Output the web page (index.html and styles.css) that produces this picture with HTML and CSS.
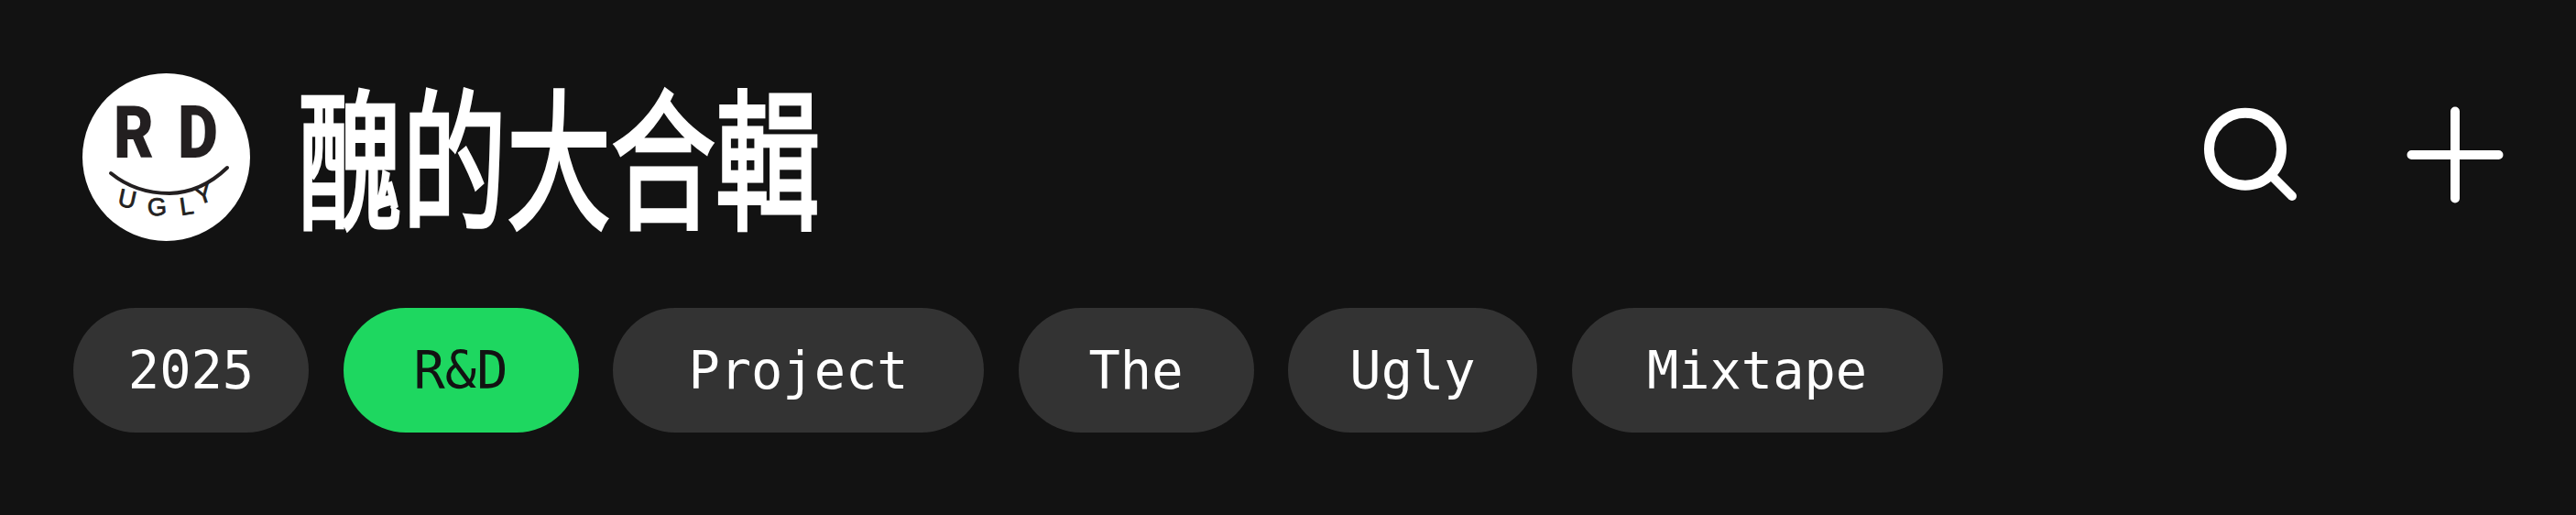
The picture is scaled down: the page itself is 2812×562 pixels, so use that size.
FILE: index.html
```html
<!DOCTYPE html>
<html lang="zh-Hant">
<head>
  <meta charset="UTF-8" />
  <title>醜的大合輯</title>
  <link rel="stylesheet" href="styles.css">
</head>
<body>

<header class="topbar">
  <div class="brand">
    <svg class="logo" viewBox="0 0 183 183" width="183" height="183">
      <circle cx="91.5" cy="91.5" r="91.5" fill="#fff" />
      <text class="logo-rd" x="34" y="92" textLength="44" lengthAdjust="spacingAndGlyphs">R</text>
      <text class="logo-rd" x="104" y="92" textLength="44" lengthAdjust="spacingAndGlyphs">D</text>
      <path class="logo-smile" d="M31 109 Q58 131 95 131 Q130 130 158 103" />
      <text class="logo-ugly" transform="translate(47 146) rotate(12)" text-anchor="middle">U</text>
      <text class="logo-ugly" transform="translate(82 155) rotate(-4)" text-anchor="middle">G</text>
      <text class="logo-ugly" transform="translate(115 154) rotate(-8)" text-anchor="middle">L</text>
      <text class="logo-ugly" transform="translate(135 141) rotate(-18)" text-anchor="middle">Y</text>
    </svg>
    <h1 class="title">醜的大合輯</h1>
  </div>
  <div class="actions">
    <svg class="icon" viewBox="0 0 120 120" width="120" height="120">
      <circle cx="61" cy="50.7" r="39.5" stroke-width="11" />
      <path d="M90 80 L112 102" />
    </svg>
    <svg class="icon" viewBox="0 0 120 120" width="120" height="120">
      <path d="M60 9.5 V104.5 M12.5 57 H107.5" />
    </svg>
  </div>
</header>

<nav class="pills">
  <a class="pill">2025</a>
  <a class="pill active">R&amp;D</a>
  <a class="pill pill-lg">Project</a>
  <a class="pill">The</a>
  <a class="pill pill-md">Ugly</a>
  <a class="pill pill-lg">Mixtape</a>
</nav>

</body>
</html>
```

FILE: styles.css
```css
html, body {
  height: 100%;
}

body {
  margin: 0;
  padding-top: 80px;
  box-sizing: border-box;
  background-color: #121212;
  color: white;
  overflow: hidden;
}

.topbar {
  display: flex;
  justify-content: space-between;
  align-items: center;
  padding: 0 72px 0 90px;
}

.brand {
  display: flex;
  align-items: center;
  gap: 52px;
}

.logo {
  display: block;
}

.logo-rd {
  font-family: Roboto, "Liberation Sans", sans-serif;
  font-size: 80px;
  font-weight: 900;
  fill: #231f20;
}

.logo-smile {
  fill: none;
  stroke: #231f20;
  stroke-width: 4;
  stroke-linecap: round;
}

.logo-ugly {
  font-family: "Liberation Sans", sans-serif;
  font-size: 27px;
  fill: #231f20;
  stroke: #231f20;
  stroke-width: 0.8;
}

.title {
  margin: 0;
  font-family: "Noto Sans CJK TC", "Noto Sans CJK SC", sans-serif;
  font-size: 114px;
  font-weight: 400;
  line-height: 182px;
  -webkit-text-stroke: 3px white;
  /* the wordmark is drawn tall and narrow */
  transform: translateY(-6px) scaleY(1.45);
}

.actions {
  display: flex;
  gap: 110px;
}

.icon {
  display: block;
  fill: none;
  stroke: white;
  stroke-width: 10;
  stroke-linecap: round;
}

.pills {
  display: flex;
  gap: 37.5px;
  margin-top: 73px;
  padding-left: 80px;
}

.pill {
  display: flex;
  justify-content: center;
  align-items: center;
  width: 257px;
  height: 136px;
  border-radius: 68px;
  background-color: #333333;
  color: white;
  font-family: "DejaVu Sans Mono", monospace;
  font-size: 57px;
  font-weight: 400;
}

.pill-md {
  width: 272px;
}

.pill-lg {
  width: 405px;
}

.pill.active {
  background-color: #1ed760;
  color: #121212;
}
```
